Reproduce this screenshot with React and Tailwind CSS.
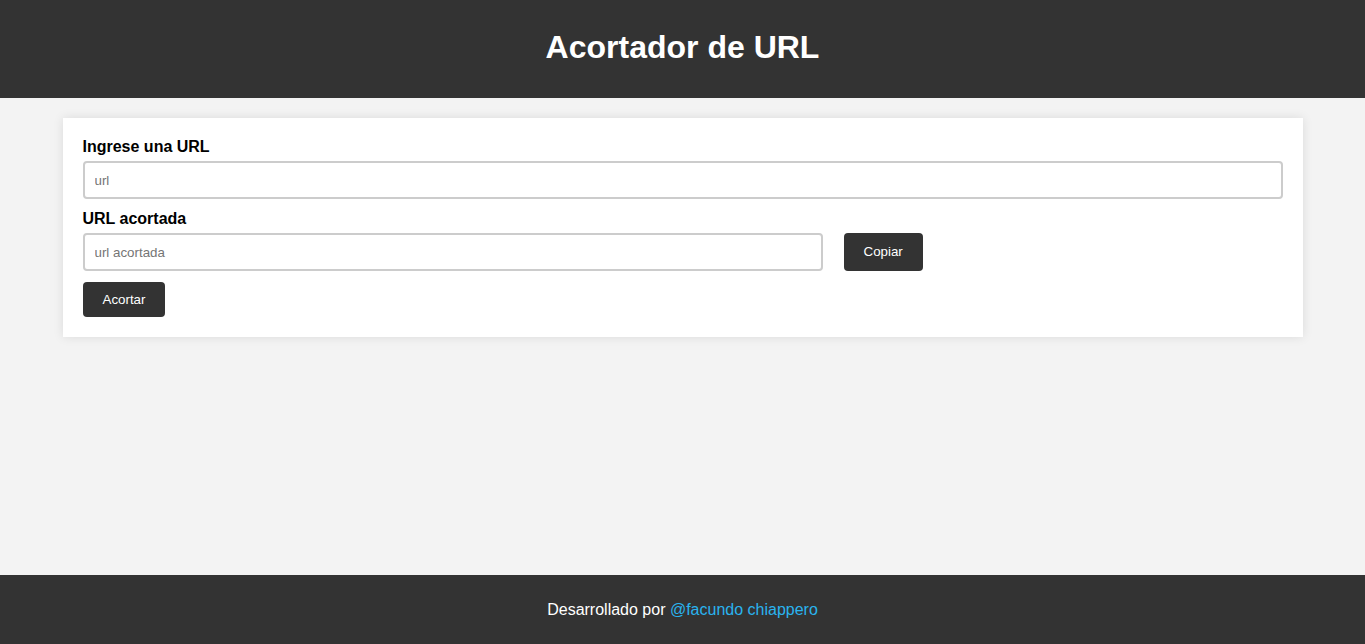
export default function App() {
  return (
    <div className="min-h-screen flex flex-col bg-[#f3f3f3]" style={{ fontFamily: '"Liberation Sans", Arial, sans-serif' }}>
      <header className="h-[98px] bg-[#333333] flex items-center justify-center shrink-0 pb-1">
        <h1 className="text-[32px] font-bold text-white leading-none">Acortador de URL</h1>
      </header>
      <main className="flex-1 pt-5">
        <div className="w-[1240px] mx-auto bg-white p-5 shadow-[0_0_10px_rgba(0,0,0,0.1)]">
          <label className="block text-base font-bold text-black leading-[18px] mb-[5px]">Ingrese una URL</label>
          <input
            type="text"
            placeholder="url"
            className="block w-full h-[38px] border-2 border-[#cccccc] rounded-[4px] px-[10px] text-[13.33px] text-black placeholder:text-[#757575] outline-none"
          />
          <label className="block text-base font-bold text-black leading-[18px] mt-[11px] mb-[5px]">URL acortada</label>
          <div className="flex items-stretch gap-[21px]">
            <input
              type="text"
              placeholder="url acortada"
              className="block w-[740px] h-[38px] border-2 border-[#cccccc] rounded-[4px] px-[10px] text-[13.33px] text-black placeholder:text-[#757575] outline-none"
            />
            <button className="h-[38px] px-5 bg-[#333333] text-white text-[13.33px] rounded-[4px]">Copiar</button>
          </div>
          <button className="mt-[11px] h-[35px] px-5 bg-[#333333] text-white text-[13.33px] rounded-[4px]">Acortar</button>
        </div>
      </main>
      <footer className="h-[69px] bg-[#333333] flex items-center justify-center shrink-0">
        <p className="text-base text-white">
          Desarrollado por <a href="#" className="text-[#2ab4ef]">@facundo chiappero</a>
        </p>
      </footer>
    </div>
  );
}
